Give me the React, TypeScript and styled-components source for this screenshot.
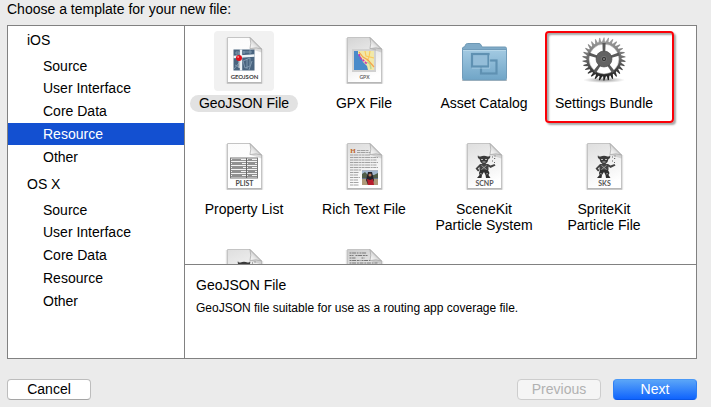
import React, { useState } from "react";
import styled, { createGlobalStyle, css } from "styled-components";

const GlobalStyle = createGlobalStyle`
  * { box-sizing: border-box; }
  body {
    margin: 0;
    background: #ebebeb;
    color: #000;
    font: 14px/16px "Liberation Sans", Arial, sans-serif;
  }
  button { font: inherit; color: inherit; border: 0; padding: 0; background: none; }
`;

const Dialog = styled.main`
  display: flex;
  flex-direction: column;
  height: 100vh;
  padding: 1px 14px 7px 7px;
`;

const Title = styled.h1`
  margin: 0 0 8px;
  font-size: 14px;
  line-height: 16px;
  font-weight: 400;
`;

const Panel = styled.div`
  display: flex;
  flex: 1;
  min-height: 0;
  border: 1px solid #818181;
  background: #fff;
`;

const Sidebar = styled.nav`
  display: flex;
  flex-direction: column;
  gap: 5px;
  flex: 0 0 177px;
  padding-top: 3px;
  border-right: 1px solid #818181;
`;

const GroupTitle = styled.h2`
  margin: 0 0 4px;
  padding-left: 19px;
  font-size: 14px;
  line-height: 22px;
  font-weight: 400;
`;

const GroupList = styled.ul`
  margin: 0;
  padding: 0;
  list-style: none;

  li:nth-child(n + 3) { margin-top: 1px; }
`;

const GroupItem = styled.button<{ $selected: boolean }>`
  display: block;
  width: 100%;
  height: 22px;
  padding-left: 35px;
  text-align: left;
  line-height: 22px;
  background: ${(p) => (p.$selected ? "#1350d1" : "transparent")};
  color: ${(p) => (p.$selected ? "#fff" : "#000")};
`;

const Content = styled.div`
  display: flex;
  flex-direction: column;
  flex: 1;
  min-width: 0;
`;

const Gallery = styled.div`
  flex: 1;
  min-height: 0;
  overflow: hidden;
  display: grid;
  grid-template-columns: repeat(auto-fill, 118px);
  grid-auto-rows: 96px;
  gap: 10px 2px;
  padding-top: 5px;
`;

const Tile = styled.button`
  position: relative;
  display: flex;
  flex-direction: column;
  align-items: center;
  gap: 4px;
`;

const IconFrame = styled.span<{ $selected: boolean }>`
  display: block;
  width: 60px;
  height: 60px;
  border-radius: 4px;
  background: ${(p) => (p.$selected ? "#f1f1f1" : "transparent")};

  svg { display: block; }
`;

const TileLabel = styled.span<{ $selected: boolean }>`
  padding: 0 9px;
  border-radius: 9px;
  white-space: pre;
  text-align: center;
  line-height: 16px;
  ${(p) =>
    p.$selected &&
    css`
      line-height: 17px;
      background: #e2e2e2;
    `}
`;

const Callout = styled.span`
  position: absolute;
  top: 0;
  left: 0;
  width: 129px;
  height: 92px;
  border: 2px solid #fb0007;
  border-radius: 4px;
  box-shadow: 2px 2px 2px rgba(0, 0, 0, 0.35), inset 2px 2px 2px rgba(0, 0, 0, 0.35);
  pointer-events: none;
`;

const Details = styled.section`
  min-height: 94px;
  padding: 12px 11px;
  border-top: 1px solid #818181;
`;

const DetailsTitle = styled.h2`
  margin: 0 0 7px;
  font-size: 14px;
  line-height: 16px;
  font-weight: 400;
`;

const DetailsText = styled.p`
  margin: 0;
  font-size: 12px;
  line-height: 16px;
`;

const Footer = styled.footer`
  display: flex;
  gap: 12px;
  margin-top: 20px;
`;

const PushButton = styled.button<{ $primary?: boolean; $leading?: boolean }>`
  width: 84px;
  height: 21px;
  border: 1px solid #bdbdbd;
  border-bottom-color: #a5a5a5;
  border-radius: 4px;
  background: #fff;
  line-height: 19px;
  margin-right: ${(p) => (p.$leading ? "auto" : "0")};

  &:disabled {
    border-color: #cdcdcd;
    background: #f5f5f5;
    color: #b1b1b1;
  }

  ${(p) =>
    p.$primary &&
    css`
      border-color: #4a99f7 #2e7ff5 #0a57e8;
      background: linear-gradient(#5aa5f8, #1064fd);
      color: #fff;
    `}
`;

const iconText = {
  textAnchor: "middle" as const,
  fontFamily: "Lato, Liberation Sans, sans-serif",
  fontWeight: 700,
};

function Page({ id, shade = "#fbfbfb", children }: { id: string; shade?: string; children?: React.ReactNode }) {
  return (
    <svg width="60" height="60" viewBox="0 0 60 60" aria-hidden="true">
      <defs>
        <linearGradient id={`${id}-paper`} x1="0" y1="0" x2="0.3" y2="1">
          <stop offset="0" stopColor={shade} />
          <stop offset="1" stopColor="#fff" />
        </linearGradient>
        <linearGradient id={`${id}-fold`} x1="0" y1="1" x2="0.7" y2="0.3">
          <stop offset="0" stopColor="#fff" />
          <stop offset="0.55" stopColor="#e2e2e2" />
          <stop offset="1" stopColor="#939393" />
        </linearGradient>
      </defs>
      <path d="M12.5 7v45h36V18" fill="none" stroke="#e2e2e2" strokeWidth="1.4" />
      <path d="M13.5 6.5h22.5l11.5 11.5v33.5h-34z" fill={`url(#${id}-paper)`} stroke="#c4c4c4" />
      <path d="M13 52h35" stroke="#aaa" />
      {children}
      <path d="M35 17.500l12.500 4v-4l-5-2z" fill="#777" opacity=".25" />
      <path d="M36 6.5l11.5 11.5q-5-2-11.500-.5 1.500-5 0-11z" fill={`url(#${id}-fold)`} stroke="#a4a4a4" strokeWidth=".7" />
    </svg>
  );
}

function GeoJsonIcon() {
  return (
    <Page id="geo">
      <rect x="19.500" y="18.500" width="21" height="21" fill="#49647f" />
      <path d="M22 21h3v2h-3zM29 30l7-3v8l-5 2zM30 20v3M36 19v4M33 28v10M21 34l4 2M29 21h9" fill="none" stroke="#8ba3b9" strokeWidth=".8" />
      <path d="M19.500 26l21-1.500M27 18.500v21" fill="none" stroke="#edf3f7" strokeWidth="2.400" />
      <path d="M20 38l5-6M35 39l3-9" stroke="#8099af" />
      <path d="M25.300 29v8" stroke="#c0c7cd" strokeWidth="1.600" />
      <circle cx="25" cy="27" r="3" fill="#e00d19" />
      <circle cx="24.200" cy="26" r="1" fill="#ff8583" />
      <text x="30.500" y="48" fontSize="6" fill="#3d3d3d" {...iconText}>GEOJSON</text>
    </Page>
  );
}

function GpxIcon() {
  return (
    <Page id="gpx" shade="#d4d4d4">
      <rect x="18" y="18" width="24" height="23" fill="#d1d1d1" />
      <rect x="20" y="20" width="20" height="19" fill="#4a8bca" />
      <path d="M24 20h16v19h-6l-1-4-4-4-2-5-3-3z" fill="#f1e8a8" />
      <path d="M31 20l1 5 8 2M35 26l-2 4M36 20l-1 6" fill="none" stroke="#fac95d" strokeWidth="1.200" />
      <path d="M33 31l3 2 1 5" fill="none" stroke="#bfd68d" strokeWidth="1.500" />
      <path d="M25 21l4 5 5 3 6 7" fill="none" stroke="#f5a34c" strokeWidth="1.200" />
      <path d="M25 23q1 5 4 6l4 4" fill="none" stroke="#cf36b5" strokeWidth="1.600" strokeDasharray="2.400 1" />
      <text x="30.500" y="48" fontSize="5" fill="#666" {...iconText}>GPX</text>
    </Page>
  );
}

function FolderIcon() {
  return (
    <svg width="60" height="60" viewBox="0 0 60 60" aria-hidden="true">
      <defs>
        <linearGradient id="folder-front" x1="0" y1="0" x2="0" y2="1">
          <stop offset="0" stopColor="#a3cae2" />
          <stop offset="1" stopColor="#70a5c7" />
        </linearGradient>
      </defs>
      <path d="M8 49.500h45" stroke="#999" opacity=".6" />
      <path d="M8.500 19v-2q0-1 2-1l1-2q.5-1.500 2-1.500h11.500q1.500 0 2 1.500l1 2h23q1.500 0 1.500 1.500v1.500z" fill="#80abc8" stroke="#6e99b5" />
      <path d="M8.500 18.500h44v29q0 1.500-1 1.500h-42q-1 0-1-1.500z" fill="url(#folder-front)" stroke="#719cba" />
      <path d="M9 19.500h43" stroke="#b7d7e9" />
      <rect x="27" y="29.500" width="15.500" height="13" fill="none" stroke="#5f91b2" strokeWidth="2.200" />
      <rect x="18" y="23" width="16.500" height="12.500" fill="#94bdd8" stroke="#5f91b2" strokeWidth="2.200" />
      <path d="M18 37.200h17.600v-13" fill="none" stroke="#b1d3e7" strokeWidth=".6" />
    </svg>
  );
}

const TEETH = 30;
const gearOutline =
  Array.from({ length: TEETH }, (_, i) => {
    const at = (offset: number, r: number) => {
      const a = ((i + offset) / TEETH) * Math.PI * 2;
      return `${(30 + r * Math.cos(a)).toFixed(2)} ${(28 + r * Math.sin(a)).toFixed(2)}`;
    };
    return `${i ? "L" : "M"}${at(0, 17.6)}L${at(0.42, 21.6)}L${at(0.64, 21.6)}L${at(0.72, 17.6)}`;
  }).join("") + "Z";

function GearIcon() {
  return (
    <svg width="60" height="60" viewBox="0 0 60 60" aria-hidden="true">
      <defs>
        <linearGradient id="gear-metal" x1="0" y1="0" x2="0" y2="1">
          <stop offset="0" stopColor="#a4a4a4" />
          <stop offset="0.5" stopColor="#696969" />
          <stop offset="1" stopColor="#161616" />
        </linearGradient>
        <radialGradient id="gear-shadow">
          <stop offset="0" stopColor="#555" stopOpacity=".65" />
          <stop offset="1" stopColor="#777" stopOpacity="0" />
        </radialGradient>
      </defs>
      <ellipse cx="30" cy="49" rx="21" ry="3" fill="url(#gear-shadow)" />
      <path d={`${gearOutline}M45 28a15 15 0 1 0-30 0a15 15 0 1 0 30 0Z`} fill="url(#gear-metal)" fillRule="evenodd" />
      <circle cx="30" cy="28" r="15" fill="none" stroke="#999" strokeWidth=".5" />
      {[0, 72, 144, 216, 288].map((angle) => (
        <path key={angle} d="M28.800 34h2.400l.4 10h-3.200z" transform={`rotate(${angle + 36} 30 28)`} fill="#5a5a5a" />
      ))}
      <circle cx="30" cy="28" r="8" fill="#626262" stroke="#484848" strokeWidth=".6" />
      <circle cx="30" cy="28" r="2.600" fill="#343434" stroke="#858585" strokeWidth=".7" />
      <circle cx="30" cy="28" r="1" fill="#888" />
    </svg>
  );
}

function PlistIcon() {
  return (
    <Page id="plist">
      <rect x="16.500" y="21" width="27" height="20" fill="#f2f2f2" stroke="#777" />
      {[23, 25, 27, 29, 31, 33, 35, 37, 39].map((y) => (
        <path key={y} d={`M17 ${y}.500h26`} stroke="#858585" strokeWidth=".9" />
      ))}
      {[22, 26, 30, 34, 38].map((y, i) => (
        <path key={y} d={`M18 ${y}.500h${9 + (i % 3)}M34 ${y}.500h${4 + (i % 2) * 3}`} stroke="#777" strokeWidth=".8" />
      ))}
      <path d="M32.500 21v20" stroke="#666" />
      <text x="30.500" y="49" fontSize="7" fill="#4a4a4a" {...iconText}>PLIST</text>
    </Page>
  );
}

function RichTextIcon() {
  return (
    <Page id="rich" shade="#dcdcdc">
      <text x="19" y="16" fontSize="7" fill="#be652a" {...iconText} fontFamily="Liberation Serif, serif">H</text>
      <g fill="none" stroke="#999" strokeWidth=".9" strokeDasharray="3 .5 5 .6 2 .5">
        <path d="M23 13.500h12M23 15.500h14M16 18h20M16 20.500h28M16 23h27M16 25.500h28M16 28h27M16 30.500h28" />
        <path d="M16 33h11M16 35.500h9M16 38h8M16 40.500h10M16 43h8M16 45.500h9M16 48h9" />
      </g>
      <rect x="28" y="33.500" width="16" height="14.500" fill="#65728c" />
      <path d="M28 34h16v6h-16z" fill="#a3b7ce" />
      <path d="M28 37l3-2 3 3 6 0 4-2v5h-16z" fill="#505d48" />
      <path d="M28 42h16v6h-16z" fill="#af9a79" />
      <path d="M34 35h4l2 8-2 5h-4l-2-5z" fill="#252129" />
      <circle cx="36" cy="38" r="1.500" fill="#b77958" />
      <path d="M33 42l3 1 3-1 1 6h-6z" fill="#b71c2c" />
    </Page>
  );
}

function ParticleFigure() {
  return (
    <g>
      <path d="M24 18q0 2 2.500 1.500 3.500-1.500 7 0 2.500.5 2.500-1.500 1 3-1.500 4l-1 3-2 2h-3l-2-2-1-3q-2.500-1-1.500-4z" fill="#3a3a3a" />
      <path d="M27 22.500h2M31 22.500h2M28.500 25h3" stroke="#ddd" strokeWidth=".8" />
      <path d="M26 27h8l2.500 1.500 4-1.500 1 1.500-5 2.500-2-1.500v3.500h-9v-3l-1.500 1.500 1.500 2-1.500 1-2.500-3z" fill="#444" />
      <path d="M26 33h8l1.500 3-1 2 2 3h-4.500l-.5-3-1.500-3-2 3-.5 3h-4.500l2.500-3-.5-2z" fill="#303030" />
      <path d="M27.500 28.500l5 4M32.500 28.500l-5 4M26 36.500l2 .5M32 37l2-.5" stroke="#bbb" strokeWidth=".7" />
      <path d="M38 20h1M40 21.500h1.200M38 24h1M40.500 19h1M40 25.500h1" stroke="#666" strokeWidth="1.100" />
    </g>
  );
}

function ParticleIcon({ id, tag }: { id: string; tag?: string }) {
  return (
    <Page id={id} shade="#dedede">
      <ParticleFigure />
      {tag && <text x="30.500" y="49" fontSize="7" fill="#555" {...iconText}>{tag}</text>}
    </Page>
  );
}

function StringsIcon() {
  return (
    <Page id="strings" shade="#ccc">
      <path
        d="M15.500 10h9m1 0h7m-17 2.500h4m2 0h12m-18 2.500h6m6 0h3m-15 2.500h11m1 0h10m-22 2.500h28"
        fill="none"
        stroke="#777"
        strokeDasharray="2 .6 4 .8"
      />
    </Page>
  );
}

const groups = [
  { name: "iOS", items: ["Source", "User Interface", "Core Data", "Resource", "Other"] },
  { name: "OS X", items: ["Source", "User Interface", "Core Data", "Resource", "Other"] },
];

const templates: { name?: string; icon: React.ReactNode; callout?: boolean }[] = [
  { name: "GeoJSON File", icon: <GeoJsonIcon /> },
  { name: "GPX File", icon: <GpxIcon /> },
  { name: "Asset Catalog", icon: <FolderIcon /> },
  { name: "Settings Bundle", icon: <GearIcon />, callout: true },
  { name: "Property List", icon: <PlistIcon /> },
  { name: "Rich Text File", icon: <RichTextIcon /> },
  { name: "SceneKit\nParticle System", icon: <ParticleIcon id="scnp" tag="SCNP" /> },
  { name: "SpriteKit\nParticle File", icon: <ParticleIcon id="sks" tag="SKS" /> },
  { icon: <ParticleIcon id="particle" /> },
  { icon: <StringsIcon /> },
];

export default function App() {
  const [category, setCategory] = useState("iOS/Resource");
  const [selected, setSelected] = useState(0);

  return (
    <>
      <GlobalStyle />
      <Dialog>
        <Title>Choose a template for your new file:</Title>
        <Panel>
          <Sidebar>
            {groups.map((group) => (
              <section key={group.name}>
                <GroupTitle>{group.name}</GroupTitle>
                <GroupList>
                  {group.items.map((item) => {
                    const key = `${group.name}/${item}`;
                    return (
                      <li key={key}>
                        <GroupItem type="button" $selected={category === key} onClick={() => setCategory(key)}>
                          {item}
                        </GroupItem>
                      </li>
                    );
                  })}
                </GroupList>
              </section>
            ))}
          </Sidebar>
          <Content>
            <Gallery>
              {templates.map((template, i) => (
                <Tile key={i} type="button" aria-pressed={selected === i} onClick={() => setSelected(i)}>
                  <IconFrame $selected={selected === i}>{template.icon}</IconFrame>
                  {template.name && <TileLabel $selected={selected === i}>{template.name}</TileLabel>}
                  {template.callout && <Callout />}
                </Tile>
              ))}
            </Gallery>
            <Details>
              <DetailsTitle>GeoJSON File</DetailsTitle>
              <DetailsText>GeoJSON file suitable for use as a routing app coverage file.</DetailsText>
            </Details>
          </Content>
        </Panel>
        <Footer>
          <PushButton type="button" $leading>Cancel</PushButton>
          <PushButton type="button" disabled>Previous</PushButton>
          <PushButton type="button" $primary>Next</PushButton>
        </Footer>
      </Dialog>
    </>
  );
}
